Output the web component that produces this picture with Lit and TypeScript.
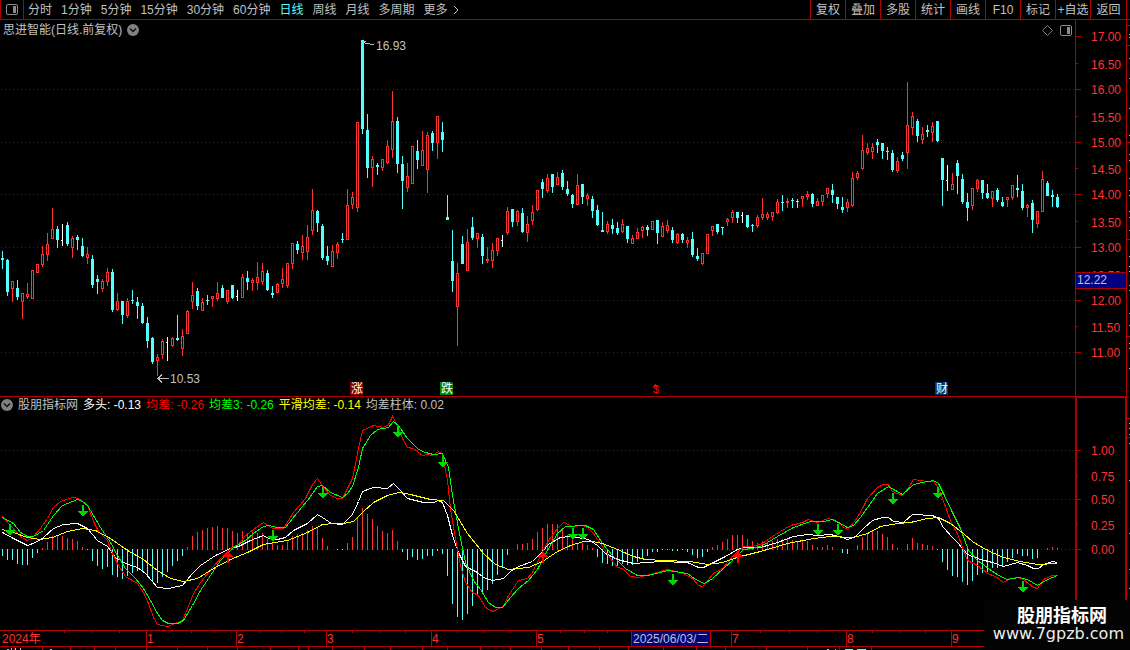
import { LitElement, html, svg, css } from "lit";
import { customElement } from "lit/decorators.js";

type Point = [number, number];

const STEP = 5;
const FIRST_X = 2;
const PRICE_TOP = 20;
const IND_TOP = 397;
const ZERO_Y = 549;

const periods = ["分时", "1分钟", "5分钟", "15分钟", "30分钟", "60分钟", "日线", "周线", "月线", "多周期", "更多"];
const tools = ["复权", "叠加", "多股", "统计", "画线", "F10", "标记", "+自选", "返回"];

// One candle per entry: kind, high, body top, body bottom, low.
const candles = `c251 258 260 269;c259 260 292 296;r281 281 289 302;c280 288 297 300;r293 293 302 319;r283 294 297 299;r270 270 299 299;r264 264 273 273;r246 254 265 267;r233 244 255 261;
r208 229 239 239;c226 229 240 248;w224 240 241 246;c222 225 244 246;r236 238 248 258;c235 237 240 250;c238 246 256 257;r247 254 258 264;c255 259 285 288;c275 279 282 294;
r279 281 289 292;r268 272 282 286;c269 272 310 312;r293 301 310 311;c301 301 315 324;r298 301 316 318;c290 300 301 304;c297 302 306 319;c303 306 323 324;c317 323 341 348;
c337 338 362 364;r354 357 361 376;r339 341 355 359;w337 342 343 361;r337 338 346 347;c315 338 340 341;r329 336 349 356;r310 311 334 334;r282 295 302 309;c288 291 306 310;
r298 302 311 311;c295 300 301 305;r296 296 299 307;r282 293 299 301;c285 288 298 298;r290 290 302 304;c285 285 298 299;w290 296 297 301;r274 277 298 298;c271 278 282 290;
r278 280 283 291;r262 277 283 290;r263 271 282 285;c270 273 290 291;c286 293 295 298;r283 284 293 293;r268 279 284 288;r263 263 286 288;r243 243 264 269;c241 244 250 254;
r235 246 253 260;r225 237 252 260;r189 210 231 235;c210 211 223 232;c224 226 258 260;c246 256 261 265;r245 251 267 267;r242 244 253 259;c233 239 240 243;r189 205 240 240;
r192 197 205 209;r122 122 208 212;c40 40 129 134;c114 130 168 178;r156 159 168 187;c163 165 167 175;r159 159 168 171;r140 146 163 164;r91 121 150 158;c117 121 164 173;
c156 164 181 209;r163 176 188 192;r146 146 184 184;c140 151 160 169;r131 150 166 166;r132 135 170 193;c131 133 143 151;r116 116 143 159;c122 132 140 152;c195 217 220 220;
c230 261 281 292;r263 273 307 346;c236 244 264 264;r229 242 271 271;c217 227 238 240;r233 233 239 248;c234 237 256 264;r247 259 261 263;r243 250 261 268;r238 238 251 256;
w235 240 241 247;r207 211 233 235;c209 209 222 227;r210 211 222 226;c208 213 232 233;r216 224 233 242;r205 212 221 225;r190 190 210 211;c179 182 189 198;r174 178 191 193;
c174 174 187 193;r172 177 185 185;c170 173 187 190;c181 189 194 196;c194 195 204 208;r174 185 205 205;c184 184 197 204;r193 195 199 206;c196 199 211 218;c205 210 225 226;
c212 230 232 232;r221 224 232 234;c219 225 229 234;c222 228 233 235;r219 224 232 233;c226 226 239 243;r235 238 244 244;r228 232 239 239;r226 227 231 238;c225 227 230 236;
r221 221 230 230;c220 220 233 244;r222 226 237 237;r220 225 231 233;c227 230 240 243;r233 234 243 244;c233 234 240 243;r237 240 243 248;c232 239 255 257;c248 256 259 261;
r253 253 264 265;r234 234 254 254;r226 226 231 236;c224 224 232 234;c227 227 228 235;r218 219 222 226;r210 212 218 223;c212 212 218 223;w212 215 216 223;c215 215 227 228;
c224 225 226 232;r215 217 226 228;r198 214 218 220;r212 214 218 220;r212 212 217 221;r199 202 213 214;c195 202 203 211;r198 201 203 208;c198 200 201 208;c199 201 202 208;
r196 196 199 207;r191 194 197 200;c193 194 204 207;r198 201 206 206;r195 195 202 206;r188 188 194 198;c184 190 195 203;c197 197 204 209;c197 207 210 213;r199 202 208 212;
r172 178 206 207;r171 173 178 180;r135 150 169 170;r143 148 153 155;r143 147 152 159;c139 142 145 153;c143 143 151 159;c147 151 152 160;c150 153 170 172;r157 161 171 173;
c152 155 159 161;r82 125 153 169;r112 116 128 135;c119 121 136 142;r127 134 140 144;c125 130 132 137;r122 126 133 142;c121 121 141 142;c158 158 180 206;w165 180 181 191;
r173 184 190 190;c160 163 176 194;c174 179 202 204;c193 202 208 221;r188 188 206 210;r179 180 189 192;c180 180 193 199;c184 193 198 199;r191 191 199 207;c188 190 200 202;
c197 202 206 207;r197 197 200 207;r185 185 198 200;c175 188 190 197;c184 191 208 210;r204 205 208 217;c200 203 220 233;r211 211 224 228;r171 179 212 212;c181 183 196 196;
c190 195 197 207;c194 197 207 208`
  .split(";")
  .map((s) => s.trim())
  .map((s) => {
    const [high, top, bottom, low] = s.slice(1).split(" ").map(Number);
    return { kind: s[0], high, top, bottom, low };
  });

// End of each histogram bar; values above the zero line are red bars.
const bars = `556 560 560 564 565 565 558 553 548 542 536 535 536 538 539 541 547 550 561 566 569 567 575 577 579 576 573 571 572 576
582 583 577 572 566 561 556 547 536 532 530 528 527 526 528 528 531 533 531 533 532 533 533 539 543 545 545 542 536 534
533 530 526 527 538 546 549 550 550 543 537 517 508 514 519 526 531 533 530 541 552 560 557 560 559 556 556 551 554 576
604 617 620 614 606 596 594 590 584 575 568 555 549 544 544 543 539 532 528 524 524 524 528 535 539 543 543 545 548 557
563 564 566 566 564 565 565 562 559 556 552 552 550 550 551 551 550 552 555 558 557 552 547 545 542 539 535 535 535 539
541 543 541 542 541 539 539 539 540 541 540 541 545 547 547 545 547 549 553 554 549 545 537 533 530 531 534 537 544 548
549 544 538 543 544 545 546 550 562 570 576 577 582 585 581 575 573 572 568 568 567 562 558 554 556 556 559 558 549 548 547 548`
  .split(/\s+/)
  .map(Number);

const redLine = "2,516 10,525 20,536 27,540 33,536 40,528 47,518 53,507 60,501 72,497 78,498 82,501 88,507 93,521 98,531 107,540 112,553 118,565 125,576 137,583 143,592 148,603 153,617 157,624 167,626 182,620 187,608 193,593 200,582 212,567 222,556 230,548 238,544 244,536 253,529 263,522 272,528 283,528 293,512 305,498 312,484 317,478 323,487 330,495 337,498 342,498 352,478 358,448 362,430 373,425 383,427 388,424 392,416 398,427 402,438 407,447 413,448 422,455 427,454 432,455 438,451 442,454 447,480 450,508 455,538 460,565 465,582 472,592 478,595 485,607 492,611 503,606 508,595 518,580 527,578 532,572 540,555 548,540 557,528 563,522 572,526 582,525 587,527 592,532 600,543 610,558 617,567 622,568 630,576 638,577 653,573 667,569 683,573 692,578 698,585 702,586 713,573 722,568 733,555 743,546 752,546 762,543 775,534 790,525 802,522 808,519 817,522 828,518 837,521 842,526 847,529 855,520 862,508 867,498 877,487 883,484 888,484 892,491 902,495 908,487 913,479 927,481 933,481 938,487 942,498 947,512 952,525 957,533 962,547 967,560 977,565 987,573 995,576 1003,582 1010,578 1017,577 1023,579 1033,587 1037,588 1043,579 1052,575 1057,575";
const greenLine = "2,517 13,523 20,532 27,536 33,536 43,530 53,515 62,505 77,499 82,501 87,505 93,515 100,527 110,542 117,555 125,568 135,578 143,588 150,600 157,613 162,620 168,623 177,623 183,620 192,605 200,590 210,575 220,560 233,547 245,540 253,533 263,526 268,525 277,527 285,527 292,518 307,500 317,486 322,485 330,492 342,497 347,493 352,486 358,467 362,448 370,435 377,429 388,427 393,421 398,425 407,438 418,449 425,452 433,454 442,453 448,467 452,495 458,528 465,562 473,580 480,589 488,602 495,607 502,607 510,597 518,588 528,580 537,569 548,548 557,533 565,526 585,525 593,529 602,543 612,555 625,568 637,575 648,575 667,570 687,573 695,579 704,583 712,578 723,568 733,559 743,549 752,548 762,545 777,536 793,527 810,521 823,521 832,519 838,522 847,527 853,525 860,517 867,507 877,493 888,486 902,494 913,484 922,482 933,480 938,483 943,493 952,512 960,528 968,550 977,560 988,568 998,575 1007,579 1018,577 1027,579 1037,585 1047,579 1057,575";
const whiteLine = "2,532 13,538 27,545 35,542 43,537 53,528 63,524 77,523 87,528 97,540 107,546 115,557 125,563 137,567 145,573 157,587 168,588 182,585 192,573 200,565 215,555 230,548 238,546 250,540 263,535 268,538 277,539 285,537 293,530 307,523 317,514 322,517 331,523 342,524 352,514 358,501 362,491 373,487 387,488 393,483 398,488 407,498 423,502 433,502 438,500 442,502 447,515 452,535 458,552 465,566 477,572 483,577 492,580 503,578 510,571 518,566 532,561 540,553 548,544 560,537 570,536 588,539 597,545 605,553 617,559 633,563 660,561 687,562 698,567 703,567 713,562 725,556 737,549 743,547 760,547 777,542 793,536 807,534 817,535 830,534 842,537 847,539 855,536 863,528 872,520 882,517 888,517 893,521 903,522 912,514 932,515 938,518 943,527 952,537 957,542 967,554 980,559 992,562 1003,566 1017,562 1027,565 1033,568 1038,568 1043,564 1052,561 1057,562";
const yellowLine = "2,529 13,532 27,537 40,539 52,537 67,531 82,528 95,530 110,538 127,550 143,559 157,570 170,578 183,581 197,578 213,568 230,559 247,552 263,544 287,540 307,532 322,524 333,523 343,523 353,521 363,511 373,502 387,495 398,492 410,494 430,499 443,500 453,510 467,533 483,553 495,564 508,569 528,567 542,561 557,551 570,545 583,541 592,541 602,543 617,549 633,556 645,559 663,560 690,561 707,564 722,562 740,556 760,551 787,543 813,538 830,536 853,537 867,533 880,526 897,523 910,522 927,518 938,517 950,523 963,533 972,541 985,549 1003,557 1020,561 1037,564 1057,563";

const sells: Point[] = [[10, 524], [83, 505], [273, 530], [323, 487], [398, 426], [443, 456], [573, 528], [583, 528], [673, 574], [818, 524], [838, 524], [893, 493], [938, 487], [1023, 581]];
const buys: Point[] = [[228, 551], [543, 551], [738, 551]];

const priceGrid = [89, 142, 194, 247, 300, 352];
const priceTicks: [string, number, boolean][] = [
  ["17.00", 36, true], ["16.50", 63, false], ["16.00", 89, true], ["15.50", 116, false], ["15.00", 142, true],
  ["14.50", 168, false], ["14.00", 194, true], ["13.50", 221, false], ["13.00", 247, true], ["12.50", 274, false],
  ["12.00", 300, true], ["11.50", 326, false], ["11.00", 352, true],
];
const indTicks: [string, number, boolean][] = [
  ["1.00", 450, true], ["0.75", 475, false], ["0.50", 499, true], ["0.25", 524, false], ["0.00", 549, true],
];

const months: [string, number][] = [["1", 146], ["2", 236], ["3", 326], ["4", 431], ["5", 536], ["7", 731], ["8", 846], ["9", 951]];
const weekTicks = [64, 91, 119, 169, 191, 214, 259, 281, 304, 352, 379, 405, 457, 484, 510, 560, 584, 607, 760, 789, 817, 872, 899, 925];
const footTicks = [14, 42, 70, 94, 115, 146, 177, 207, 237, 270, 298, 308, 332, 364, 390, 422, 447, 480, 510, 541, 568, 599, 628, 663, 696, 725, 766, 807, 839, 871];
const sideMarks = [34, 37, 58, 78, 108, 135, 154, 160, 178, 190, 195, 211, 217, 230, 256, 266, 271, 285, 290, 313, 325, 343, 348, 368, 423, 428, 434, 443, 480, 533, 569, 588];
const sideLines = [25, 45, 142, 239, 336, 418, 437];

const legend = [
  { label: "多头: -0.13", tone: "white" },
  { label: "均差: -0.26", tone: "red" },
  { label: "均差3: -0.26", tone: "green" },
  { label: "平滑均差: -0.14", tone: "yellow" },
  { label: "均差柱体: 0.02", tone: "gray" },
];

const drawCandle = (c: { kind: string; high: number; top: number; bottom: number; low: number }, i: number) => {
  const x = FIRST_X + i * STEP;
  if (c.kind === "w") {
    return svg`<path class="doji" d="M${x} ${c.high}h1V${c.low}h-1zM${x - 1} ${c.top}h1v1h-1z"/>`;
  }
  if (c.kind === "c") {
    return svg`<path class="down" d="M${x} ${c.high}h1V${c.low}h-1zM${x - 1} ${c.top}h3V${c.bottom}h-3z"/>`;
  }
  return svg`<path class="up" d="M${x} ${c.high}h1V${c.top}h-1zM${x} ${c.bottom}h1V${c.low}h-1z"/>
    <path class="up" fill-rule="evenodd" d="M${x - 1} ${c.top}h3V${c.bottom}h-3zM${x} ${c.top + 1}h1V${Math.max(c.bottom - 1, c.top + 1)}h-1z"/>`;
};

const drawBar = (end: number, i: number) => {
  const x = FIRST_X + i * STEP;
  return end < ZERO_Y
    ? svg`<rect class="up" x=${x} y=${end} width="1" height=${ZERO_Y + 1 - end}/>`
    : svg`<rect class="down" x=${x} y=${ZERO_Y} width="1" height=${end - ZERO_Y}/>`;
};

const gridLine = (y: number) => svg`<line class="grid" x1="1" x2="100%" y1=${y + 0.5} y2=${y + 0.5}/>`;

const axisTick = ([label, y, major]: [string, number, boolean]) => svg`
  <rect class="rule" x="0" y=${y} width=${major ? 6 : 3} height="1"/>
  <text class="scale" x="16" y=${y + (major ? 5 : 6)}>${label}</text>`;

const chevronDisc = html`<svg class="disc" width="12" height="12" viewBox="0 0 12 12" aria-hidden="true">
  <circle cx="6" cy="6" r="6" fill="#808080"/>
  <path d="M3 4.5L6 7.5L9 4.5" fill="none" stroke="#111" stroke-width="1.5"/>
</svg>`;

const panelIcon = html`<svg class="panel-icon" width="12" height="11" viewBox="0 0 12 11" aria-hidden="true">
  <rect x="0.5" y="0.5" width="11" height="10" rx="1.5" fill="none" stroke="#8c8c8c"/>
  <rect x="7" y="2" width="3" height="7" fill="#8c8c8c"/>
</svg>`;

@customElement("app-root")
export class AppRoot extends LitElement {
  static styles = css`
    :host {
      --line: #b00000;
      --text: #c0c0c0;
      --red: #ff3232;
      --cyan: #54ffff;
      display: flex;
      flex-direction: column;
      position: relative;
      min-height: 100vh;
      overflow: hidden;
      background: #000;
      color: var(--text);
      font: 12px/16px "Liberation Sans", "Noto Sans CJK SC", sans-serif;
    }
    svg { display: block; }
    button {
      margin: 0;
      padding: 0;
      border: 0;
      background: none;
      color: inherit;
      font: inherit;
      white-space: nowrap;
      cursor: pointer;
    }
    .toolbar { display: flex; height: 19px; border-bottom: 1px solid var(--line); }
    .toggle {
      display: grid;
      place-items: center;
      width: 24px;
      border: solid var(--line);
      border-width: 0 1px;
    }
    .periods { display: flex; flex: 1; align-items: center; gap: 9px; padding-left: 4px; }
    .periods .current { color: var(--cyan); }
    .more { display: flex; align-items: center; gap: 5px; }
    .tools { display: flex; border-right: 1px solid var(--line); margin-right: 3px; }
    .tools button { width: 35px; border-left: 1px solid var(--line); }
    .tools button:last-child { width: 36px; }
    .body { display: flex; }
    .stage { flex: 1; min-width: 0; }
    .pane { display: grid; grid-template-columns: minmax(0, 1fr) 52px; }
    .price { border-bottom: 1px solid var(--line); }
    .plot { position: relative; min-width: 0; }
    .plot svg.canvas { width: 100%; }
    .axis { border: solid var(--line); border-width: 0 1px; }
    .indicator .axis { border-width: 2px 2px 0; margin-top: -1px; }
    .caption {
      position: absolute;
      inset: 0 0 auto 0;
      display: flex;
      align-items: center;
      gap: 5px;
      padding: 2px 3px 0;
      white-space: nowrap;
    }
    .caption .spacer { flex: 1; }
    .caption .panel-icon { margin: 0 0 0 2px; }
    .legend { padding-left: 1px; padding-top: 0; }
    .white { color: #fff; }
    .red { color: #ff0000; }
    .green { color: #00ff00; }
    .yellow { color: #ffff00; }
    .gray { color: var(--text); }
    .timeline { border: solid var(--line); border-width: 1px 0; }
    .timeline svg, .foot svg { width: 100%; }
    .crisp { shape-rendering: crispEdges; }
    .grid { stroke: #a00000; stroke-dasharray: 1 3; }
    .up { fill: var(--red); }
    .down { fill: var(--cyan); }
    .doji { fill: #fff; }
    .rule { fill: var(--line); }
    .curve { fill: none; stroke-width: 1; }
    .scale { fill: var(--red); }
    .note { fill: var(--text); }
    .flag { fill: #fff; }
    .dividend { fill: #ff0000; font-size: 11px; }
    .cursor { fill: #000080; stroke: var(--line); }
    .brand {
      position: absolute;
      right: 0;
      bottom: 0;
      box-sizing: border-box;
      width: 146px;
      height: 50px;
      padding: 3px 6px 0 0;
      background: #030303;
      color: #fff;
      text-align: right;
    }
    .brand-name { padding-right: 17px; font: bold 18px/22px "Noto Sans CJK SC", sans-serif; }
    .brand-site { display: block; color: #eee; font: 16px/18px "DejaVu Sans", sans-serif; text-decoration: none; }
  `;

  private priceChart() {
    return svg`<g transform="translate(0 ${-PRICE_TOP})">
      <g class="crisp">
        ${priceGrid.map(gridLine)}
        ${candles.map(drawCandle)}
        <path d="M361.5 46V41.5H366M362 41.5L366 43.5H369L371 44.5H374" fill="none" stroke="#c0c0c0"/>
        <path d="M157 378.5H169M162 374.500L158 378.500L162 382.500" fill="none" stroke="#c0c0c0"/>
        <path d="M350 382h11l2 2v11h-13z" fill="#800000"/>
        <path d="M440 382h11l2 2v11h-13z" fill="#008000"/>
        <path d="M935 382h11l2 2v11h-13z" fill="#003870"/>
        <path d="M655 384h1v1h1v1h1v1h-5v-1h1v-1h1z" fill="#ff0000"/>
      </g>
      <text class="note" x="376" y="50">16.93</text>
      <text class="note" x="170" y="383">10.53</text>
      <text class="flag" x="351" y="393">涨</text>
      <text class="flag" x="441" y="393">跌</text>
      <text class="flag" x="936" y="393">财</text>
      <text class="dividend" x="653" y="393">$</text>
    </g>`;
  }

  private indicatorChart() {
    return svg`<g transform="translate(0 ${-IND_TOP})" class="crisp">
      ${[450, 499, 549].map(gridLine)}
      ${bars.map(drawBar)}
      <g transform="translate(0.5 0.5)">
        <polyline class="curve" stroke="#fff" points=${whiteLine}/>
        <polyline class="curve" stroke="#ff0000" points=${redLine}/>
        <polyline class="curve" stroke="#00ff00" points=${greenLine}/>
        <polyline class="curve" stroke="#ffff00" points=${yellowLine}/>
      </g>
      ${sells.map(([x, y]) => svg`<path fill="#00d800" d="M${x - 1} ${y}h2v6h4l-5 6l-5 -6h4z"/>`)}
      ${buys.map(([x, y]) => svg`<path fill="#ff0000" d="M${x - 1} ${y + 12}v-6h-4l5 -6l5 6h-4v6z"/>`)}
    </g>`;
  }

  render() {
    return html`
      <header class="toolbar">
        <button class="toggle" aria-label="侧栏">${panelIcon}</button>
        <nav class="periods">
          ${periods.map((p) =>
            p === "更多"
              ? html`<button class="more">${p}<svg width="6" height="10" viewBox="0 0 6 10" aria-hidden="true"><path d="M1 1L5 5L1 9" fill="none" stroke="#c0c0c0"/></svg></button>`
              : html`<button class=${p === "日线" ? "current" : ""}>${p}</button>`
          )}
        </nav>
        <div class="tools">${tools.map((t) => html`<button>${t}</button>`)}</div>
      </header>
      <main class="body">
        <div class="stage">
          <section class="pane price">
            <div class="plot">
              <svg class="canvas" height="376">${this.priceChart()}</svg>
              <div class="caption">
                <span>思进智能(日线.前复权)</span>${chevronDisc}
                <span class="spacer"></span>
                <svg width="11" height="11" viewBox="0 0 11 11" aria-hidden="true"><path d="M5.500 0.500L10.500 5.500L5.500 10.500L0.500 5.500Z" fill="none" stroke="#808080"/></svg>
                ${panelIcon}
              </div>
            </div>
            <div class="axis">
              <svg width="50" height="376">
                <g transform="translate(-1 ${-PRICE_TOP})">
                  ${priceTicks.map(axisTick)}
                  <rect class="cursor crisp" x="-1" y="272.5" width="54" height="16"/>
                  <text class="note" x="2" y="284">12.22</text>
                </g>
              </svg>
            </div>
          </section>
          <section class="pane indicator">
            <div class="plot">
              <svg class="canvas" height="233">${this.indicatorChart()}</svg>
              <div class="caption legend">
                ${chevronDisc}<span>股朋指标网</span>
                ${legend.map((l) => html`<span class=${l.tone}>${l.label}</span>`)}
              </div>
            </div>
            <div class="axis">
              <svg width="48" height="232">
                <g transform="translate(-2 -398)">${indTicks.map(axisTick)}</g>
              </svg>
            </div>
          </section>
        </div>
        <svg width="3" height="610" aria-hidden="true">
          <g transform="translate(0 ${-PRICE_TOP})">
            ${sideMarks.map((y) => svg`<rect x="2" y=${y} width="1" height="1" fill="#c0c0c0"/>`)}
            ${sideLines.map((y) => svg`<rect class="rule" x="0" y=${y} width="3" height="1"/>`)}
          </g>
        </svg>
      </main>
      <div class="timeline">
        <svg height="15">
          <g class="crisp">
            ${weekTicks.map((x) => svg`<rect class="rule" x=${x} y="0" width="1" height="2"/>`)}
            ${months.map(([, x]) => svg`<rect class="rule" x=${x} y="0" width="1" height="15"/>`)}
            <rect class="cursor" x="631.5" y="-0.5" width="79" height="16"/>
          </g>
          <text class="scale" x="2" y="12">2024年</text>
          ${months.map(([m, x]) => svg`<text class="scale" x=${x + 1} y="12">${m}</text>`)}
          <text class="note" x="633" y="12">2025/06/03/二</text>
        </svg>
      </div>
      <div class="foot" aria-hidden="true">
        <svg height="3">
          ${footTicks.map((x) => svg`<rect class="rule" x=${x} y="0" width="1" height="3"/>`)}
          <path d="M7 2h2v1h-2zM11 1h1v2h-1zM15 1h1v2h-1zM20 1h1v2h-1zM50 2h2v1h-2zM827 2h2v1h-2zM835 2h1v1h-1z" fill="#c0c0c0"/>
          <path d="M845 2h5v1h-5zM849 2h4v1h-4zM857 2h9v1h-9z" fill="#54ffff"/>
        </svg>
      </div>
      <aside class="brand">
        <div class="brand-name">股朋指标网</div>
        <a class="brand-site" href="#">www.7gpzb.com</a>
      </aside>
    `;
  }
}
